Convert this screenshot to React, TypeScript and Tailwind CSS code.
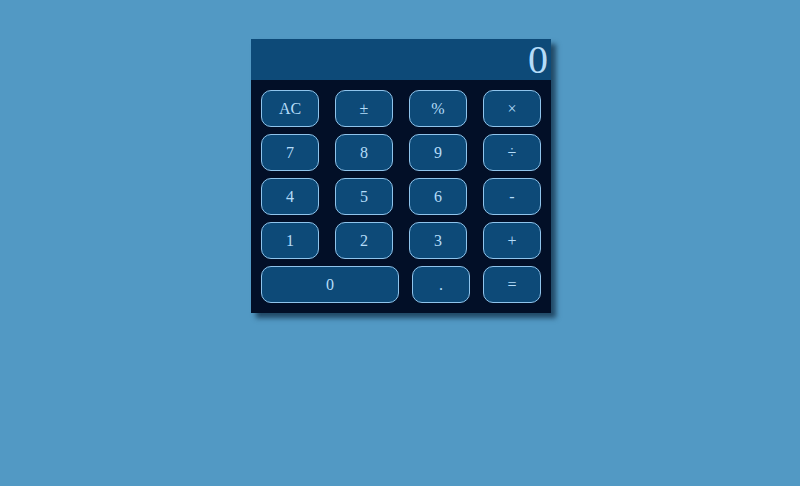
const rows: string[][] = [
  ["AC", "±", "%", "×"],
  ["7", "8", "9", "÷"],
  ["4", "5", "6", "-"],
  ["1", "2", "3", "+"],
];

function Key({ label, wide }: { label: string; wide?: boolean }) {
  return (
    <button
      type="button"
      className={
        (wide ? "w-[138px]" : "w-[58px]") +
        " h-[37px] rounded-[10px] border border-[#8fc4ec] bg-[#0d4a78] text-[16px] leading-none text-[#b4dcf8]"
      }
    >
      {label}
    </button>
  );
}

export default function App() {
  return (
    <div
      className="min-h-screen w-full bg-[#5299c4] pt-[39px]"
      style={{ fontFamily: '"Liberation Serif", "Times New Roman", serif' }}
    >
      <div className="mx-auto w-[300px] translate-x-[1px] bg-[#020f27] shadow-[5px_5px_5px_rgba(0,20,40,0.6)]">
        <div className="flex h-[41px] items-center justify-end bg-[#0d4a78] pr-[3px] text-[40px] leading-none text-[#b4dcf8]">
          0
        </div>
        <div className="flex flex-col gap-[7px] p-[10px]">
          {rows.map((r, i) => (
            <div key={i} className="flex justify-between">
              {r.map((k) => (
                <Key key={k} label={k} />
              ))}
            </div>
          ))}
          <div className="flex justify-between">
            <Key label="0" wide />
            <Key label="." />
            <Key label="=" />
          </div>
        </div>
      </div>
    </div>
  );
}
